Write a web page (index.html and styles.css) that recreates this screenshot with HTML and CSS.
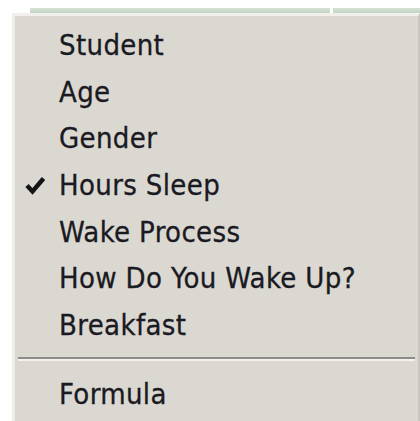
FILE: index.html
```html
<!DOCTYPE html>
<html>
<head>
<meta charset="utf-8">
<link rel="stylesheet" href="styles.css">
</head>
<body>
  <div class="toolbar-edge">
    <span class="edge-seg first"></span>
    <span class="edge-seg second"></span>
  </div>
  <div class="menu">
    <ul class="items">
      <li class="item">Student</li>
      <li class="item">Age</li>
      <li class="item">Gender</li>
      <li class="item checked">
        <svg class="check" viewBox="0 0 20 20" width="20" height="20" aria-hidden="true">
          <path d="M2 10.5 L7.5 16.5 L18.5 3.5" fill="none" stroke="#141414" stroke-width="4.4" stroke-linejoin="miter" stroke-linecap="butt"/>
        </svg>
        Hours Sleep
      </li>
      <li class="item">Wake Process</li>
      <li class="item">How Do You Wake Up?</li>
      <li class="item">Breakfast</li>
    </ul>
    <div class="separator"></div>
    <ul class="items">
      <li class="item">Formula</li>
    </ul>
  </div>
</body>
</html>
```

FILE: styles.css
```css
html, body {
  margin: 0;
  padding: 0;
  background: #ffffff;
  width: 420px;
  height: 421px;
  overflow: hidden;
}

.toolbar-edge {
  display: flex;
  margin: 8px 0 0 30px;
  height: 5px;
  gap: 3px;
}

.edge-seg {
  display: block;
  height: 5px;
  background: linear-gradient(#d6e2d6, #c4d5c4);
}

.edge-seg.first {
  width: 300px;
}

.edge-seg.second {
  flex: 1;
}

.menu {
  margin-left: 12px;
  height: 420px;
  box-sizing: border-box;
  background: #dbd8d2;
  border-left: 3px solid #eeede9;
  border-top: 3px solid #f1f0ec;
  border-right: 2px solid #c9c6c0;
  padding-top: 6px;
  font-family: "DejaVu Sans Condensed", "DejaVu Sans", sans-serif;
  font-size: 29px;
  letter-spacing: 0.35px;
  color: #1a1a22;
  -webkit-text-stroke: 0.3px #1a1a22;
}

.items {
  list-style: none;
  margin: 0;
  padding: 0;
}

.item {
  position: relative;
  height: 46.67px;
  line-height: 46.67px;
  padding-left: 44px;
  white-space: nowrap;
}

.check {
  position: absolute;
  left: 10px;
  top: 13px;
}

.separator {
  margin: 8px 3px 10px 3px;
  height: 2px;
  background: #8e8c88;
  border-bottom: 2px solid #f3f2ee;
}
```
